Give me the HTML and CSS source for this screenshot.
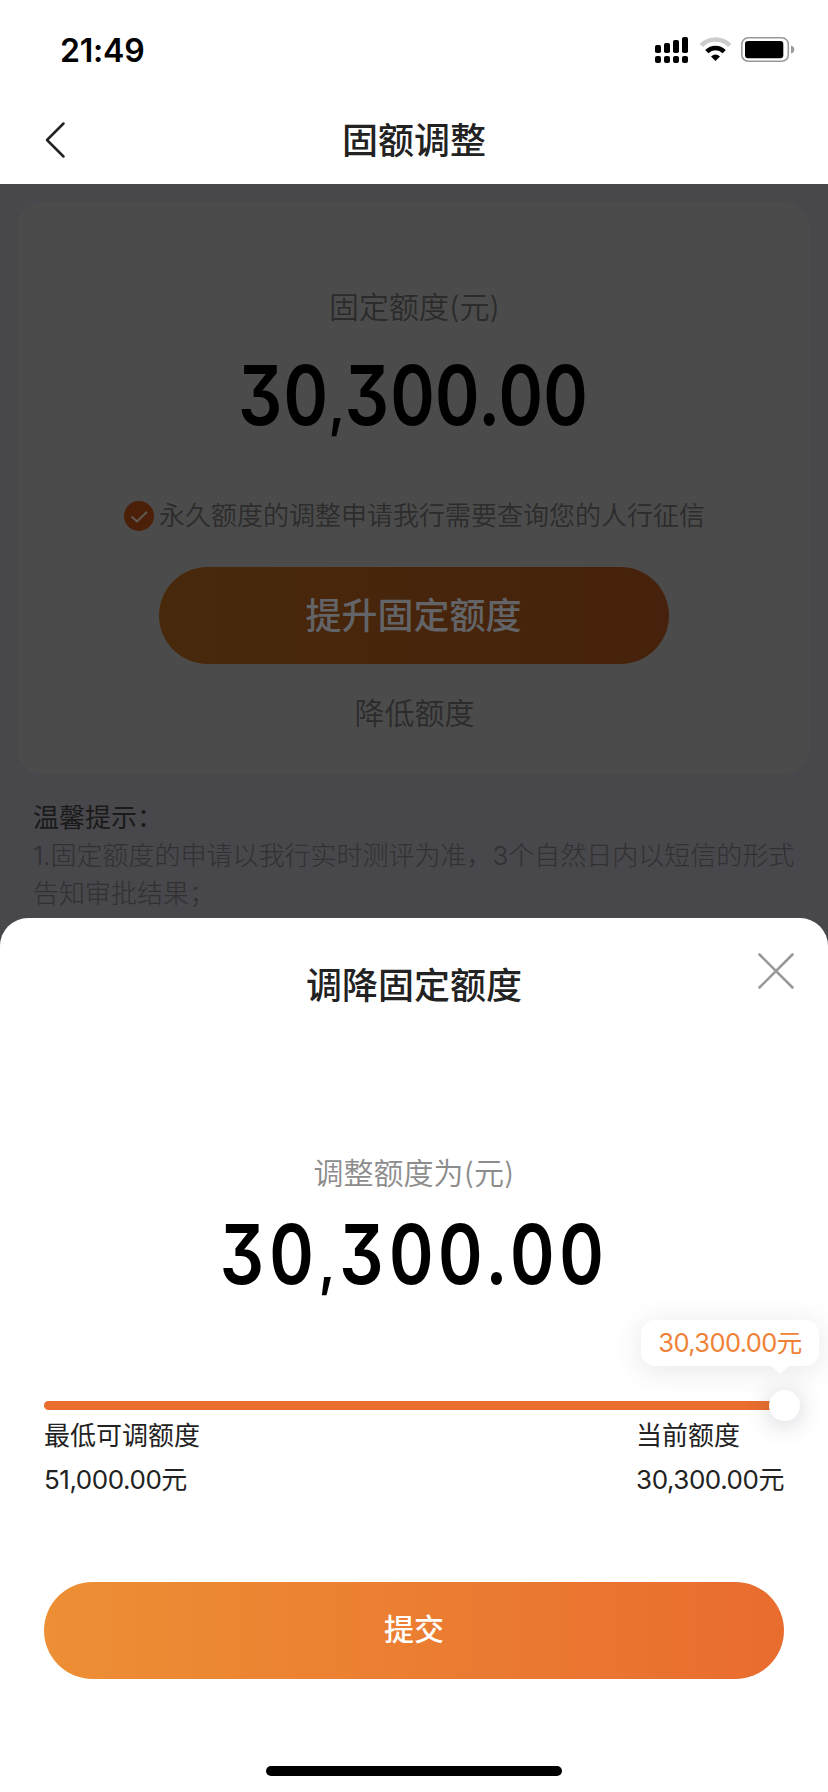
FILE: index.html
```html
<!DOCTYPE html>
<html lang="zh-CN">
<head>
<meta charset="utf-8">
<title>固额调整</title>
<link rel="stylesheet" href="styles.css">
</head>
<body>
<div class="screen">
  <header class="header">
    <div class="status">
      <span class="clock">21:49</span>
      <svg class="status-icons" width="140" height="26" viewBox="0 0 140 26">
        <g fill="#000">
          <rect x="0" y="8" width="6" height="8" rx="1.8"/>
          <rect x="9" y="6" width="6" height="10" rx="1.8"/>
          <rect x="18" y="3" width="6" height="13" rx="1.8"/>
          <rect x="27" y="0" width="6" height="16" rx="1.8"/>
          <rect x="0" y="19" width="6" height="7" rx="2"/>
          <rect x="9" y="19" width="6" height="7" rx="2"/>
          <rect x="18" y="19" width="6" height="7" rx="2"/>
          <rect x="27" y="19" width="6" height="7" rx="2"/>
        </g>
        <path d="M46.3 8.4a20 20 0 0 1 28.4 0" fill="none" stroke="#ccc" stroke-width="4.6"/>
        <path d="M51.8 14.6a12.4 12.4 0 0 1 17.4 0" fill="none" stroke="#000" stroke-width="4.6"/>
        <path d="M60.5 24l-4.500-4.600q4.500-3.600 9 0z" fill="#000"/>
        <rect x="86.8" y="0.8" width="46.5" height="23.5" rx="6.5" fill="none" stroke="#999" stroke-width="1.6"/>
        <rect x="90" y="4" width="38.3" height="17.3" rx="3" fill="#000"/>
        <path d="M136 8.5q3.300 1 3.300 4t-3.300 4z" fill="#999"/>
      </svg>
    </div>
    <div class="nav">
      <svg class="back" width="22" height="38" viewBox="0 0 22 38"><path d="M18.5 2.500L2 19l16.500 16.500" fill="none" stroke="#222" stroke-width="2.5" stroke-linecap="round" stroke-linejoin="round"/></svg>
      <h1 class="nav-title">固额调整</h1>
    </div>
  </header>

  <main class="page">
    <section class="card">
      <p class="label label-dim">固定额度(元)</p>
      <p class="amount amount-card">30<span class="comma">,</span>300.00</p>
      <p class="consent">
        <svg width="30" height="30" viewBox="0 0 30 30"><circle cx="15" cy="15" r="15" fill="#4b1f08"/><path d="M7.500 15.500l5.500 5L23 10.800" fill="none" stroke="#615a56" stroke-width="2"/></svg>
        <span class="consent-text">永久额度的调整申请我行需要查询您的人行征信</span>
      </p>
      <div class="raise">提升固定额度</div>
      <p class="lower">降低额度</p>
    </section>
    <section class="tips">
      <p class="tips-title">温馨提示：</p>
      <p>1.固定额度的申请以我行实时测评为准，3个自然日内以短信的形式告知审批结果；</p>
    </section>
  </main>

  <section class="sheet">
    <h2 class="sheet-title">调降固定额度</h2>
    <svg class="close" width="36" height="36" viewBox="0 0 36 36"><path d="M1.500 1.500l33 33M34.500 1.500l-33 33" stroke="#999" stroke-width="2.6" stroke-linecap="round"/></svg>
    <p class="label">调整额度为(元)</p>
    <p class="amount amount-sheet">30<span class="comma">,</span>300.00</p>
    <div class="slider">
      <div class="bubble">30,300.00元</div>
      <div class="thumb"></div>
    </div>
    <div class="range">
      <div><p>最低可调额度</p><p class="money">51,000.00元</p></div>
      <div><p>当前额度</p><p class="money">30,300.00元</p></div>
    </div>
    <button class="submit">提交</button>
    <div class="home"></div>
  </section>
</div>
</body>
</html>
```
FILE: styles.css
```css
* { box-sizing: border-box; margin: 0; padding: 0; }
body { background: #48474b; font-family: Inter, "Noto Sans CJK SC", sans-serif; color: #222; }
.screen { width: 828px; height: 1792px; display: flex; flex-direction: column; overflow: hidden; }

.header { height: 184px; flex: none; background: #fff; }
.status { height: 98px; padding: 2px 33px 0 60px; display: flex; justify-content: space-between; align-items: center; }
.clock { font-size: 32px; font-weight: 600; color: #000; letter-spacing: -0.2px; }
.nav { height: 84px; display: flex; align-items: center; justify-content: center; position: relative; padding-top: 2px; }
.back { position: absolute; left: 45px; top: 23px; }
.nav-title { font-size: 36px; line-height: 52px; font-weight: 500; }

.page { height: 734px; flex: none; padding: 18px 18px 0 17px; }
.card { height: 572px; border-radius: 26px; background: #4b4b4b; display: flex; flex-direction: column; align-items: center; padding-top: 83px; }
.label { font-size: 30px; line-height: 44px; color: #8c8c8c; font-weight: 350; text-align: center; }
.label-dim { color: #2b2b2b; padding-left: 2px; }
.amount { font-size: 83px; line-height: 84px; font-weight: 600; color: #000; font-feature-settings: "cv09", "tnum"; text-align: center; white-space: nowrap; }
.amount-card { margin-top: 24px; transform: scaleX(.84); letter-spacing: -0.3px; }
.amount-sheet { margin-top: 17px; transform: scaleX(.84); letter-spacing: 4.8px; }
.comma { font-size: 62px; line-height: 1; padding: 0 2px; }
.consent { display: flex; align-items: center; gap: 5px; margin-top: 60px; height: 38px; padding-left: 2px; font-size: 26px; color: #2c2c2c; font-weight: 350; }
.consent-text { padding-bottom: 5px; }
.raise { width: 510px; height: 97px; margin-top: 32px; border-radius: 49px; background: linear-gradient(90deg, #48290c, #46210b); color: #626467; font-size: 36px; font-weight: 500; line-height: 98px; text-align: center; }
.lower { margin-top: 27px; padding-left: 2px; font-size: 30px; line-height: 44px; color: #2b2b2b; font-weight: 350; }
.tips { padding: 25px 0 0 16px; font-size: 26px; line-height: 38px; color: #313033; font-weight: 300; }
.tips-title { color: #1a1a1b; font-weight: 400; }

.sheet { flex: 1; position: relative; background: #fff; border-radius: 28px 28px 0 0; padding: 42px 44px 0; display: flex; flex-direction: column; }
.sheet-title { font-size: 36px; line-height: 52px; font-weight: 500; text-align: center; margin-bottom: 139px; }
.close { position: absolute; right: 34px; top: 35px; }
.slider { position: relative; height: 9px; flex: none; margin-top: 105px; border-radius: 5px; background: #e96e2d; }
.bubble { position: absolute; right: -35px; top: -81px; width: 178px; height: 46px; border-radius: 14px; background: #fff; color: #f08238; font-size: 25.5px; line-height: 45px; letter-spacing: -0.6px; text-align: center; box-shadow: 0 4px 28px rgba(70, 80, 95, .14); }
.bubble::after { content: ""; position: absolute; right: 30px; top: 46px; border: 9px solid transparent; border-top: 8px solid #fff; border-bottom: 0; }
.thumb { position: absolute; right: -16px; top: -11px; width: 31px; height: 31px; border-radius: 50%; background: #fff; box-shadow: 0 3px 24px rgba(50, 60, 80, .24); }
.range { display: flex; justify-content: space-between; margin-top: 4px; font-size: 26px; line-height: 44px; }
.money { letter-spacing: -0.45px; }
.submit { height: 97px; flex: none; margin-top: 80px; border: 0; border-radius: 49px; background: linear-gradient(90deg, #ed8f34, #e96c2f); color: #fff; font: 500 30px/44px Inter, "Noto Sans CJK SC", sans-serif; padding-bottom: 3px; }
.home { width: 296px; height: 10px; margin: 87px auto 0; border-radius: 5px; background: #000; }
```
